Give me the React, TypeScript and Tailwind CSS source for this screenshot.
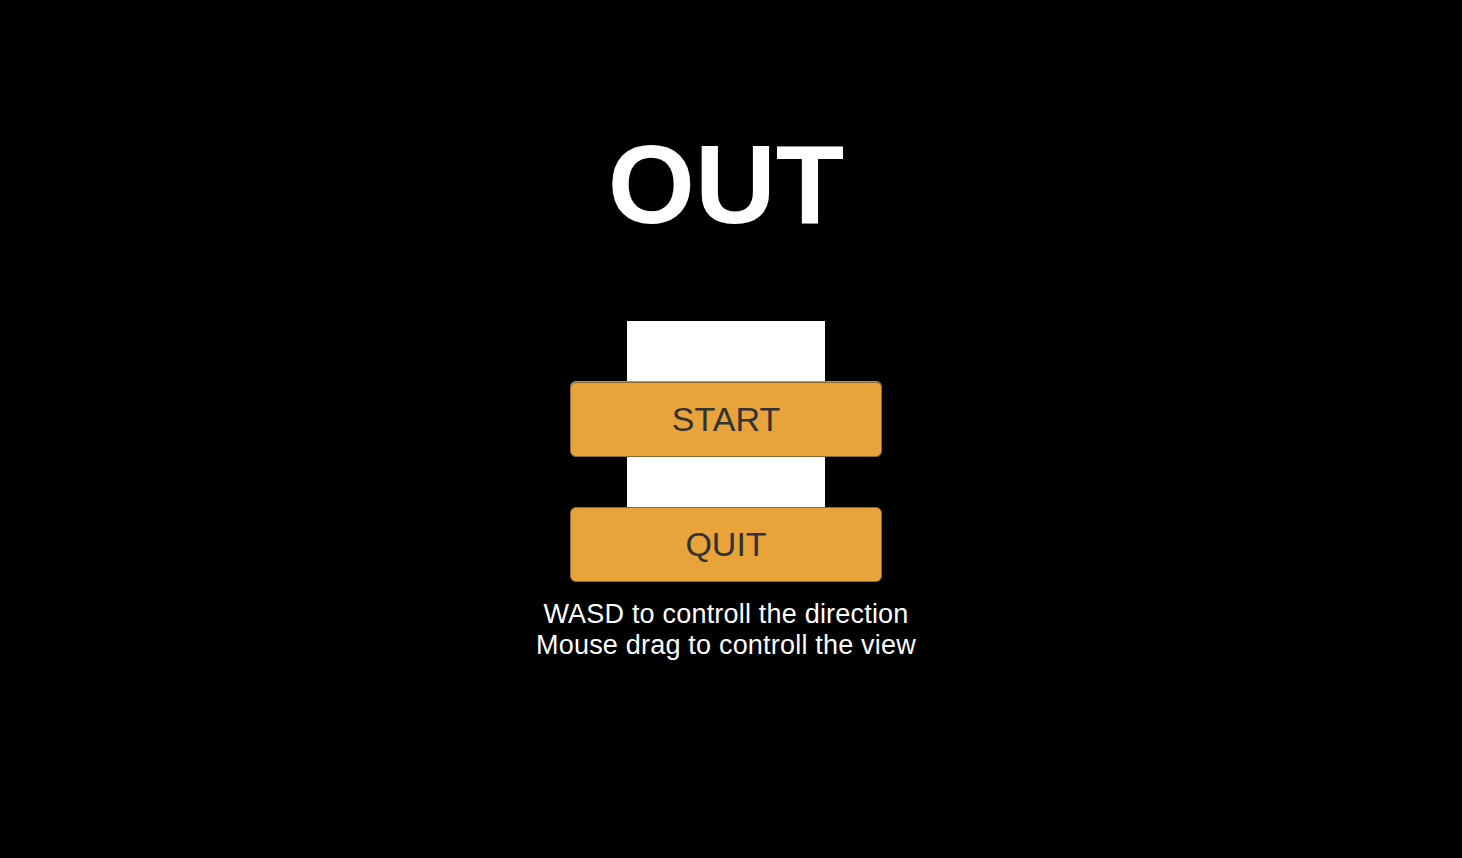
export default function App() {
    return (
        <div
            className="flex min-h-[858px] w-full flex-col items-center bg-black pr-[10px] pt-[129px]"
            style={{ fontFamily: '"Liberation Sans", Arial, sans-serif' }}
        >
            <h1 className="text-[112px] font-bold leading-[112px] text-white">OUT</h1>

            <div className="mt-[80px] flex flex-col items-center">
                <div className="h-[61px] w-[198px] bg-white" />
                <button className="flex h-[75px] w-[312px] items-center justify-center rounded-[6px] border border-[#8a6a30] bg-[#e8a43b] text-[34px] text-[#323232] shadow-[0_-1px_0_#9a9a9a]">
                    START
                </button>
                <div className="h-[50px] w-[198px] bg-white" />
                <button className="flex h-[75px] w-[312px] items-center justify-center rounded-[6px] border border-[#8a6a30] bg-[#e8a43b] text-[34px] text-[#323232]">
                    QUIT
                </button>
            </div>

            <div className="mt-[17px] text-center text-[27px] leading-[31px] tracking-[0.2px] text-white">
                <p>WASD to controll the direction</p>
                <p>Mouse drag to controll the view</p>
            </div>
        </div>
    );
}
